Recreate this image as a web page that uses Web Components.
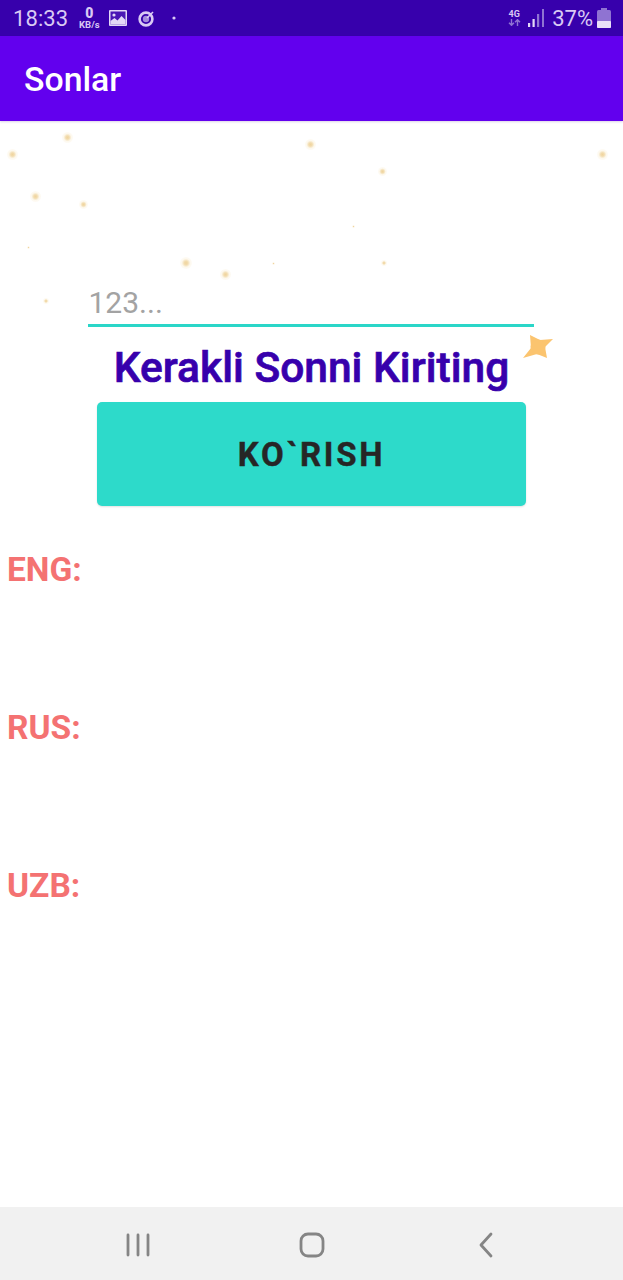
<!DOCTYPE html>
<html>
<head>
<meta charset="utf-8">
<title>Sonlar</title>
<style>
html, body { margin: 0; padding: 0; background: #fff; }
body { width: 623px; height: 1280px; overflow: hidden; font-family: Roboto, "Liberation Sans", sans-serif; display: flex; flex-direction: column; }
</style>
</head>
<body>
<status-bar></status-bar>
<app-bar>Sonlar</app-bar>
<main-screen>
  <sonlar-form></sonlar-form>
  <lang-row>ENG:</lang-row>
  <lang-row>RUS:</lang-row>
  <lang-row>UZB:</lang-row>
</main-screen>
<nav-bar></nav-bar>

<script>
const statusTemplate = document.createElement("template");
statusTemplate.innerHTML = `
<style>
:host { display: flex; align-items: center; height: 36px; flex: none; background: #3700ac; color: #d9c9f4; padding: 0 12px 0 13px; box-sizing: border-box; }
.time { font-size: 22px; letter-spacing: 0.1px; margin-right: 9px; }
.speed { display: flex; flex-direction: column; align-items: center; width: 24px; margin-right: 8px; line-height: 1; font-weight: 700; }
.speed b { font-size: 14px; height: 12px; line-height: 12px; }
.speed span { font-size: 9.500px; margin-top: 1px; }
svg { display: block; }
.pic { margin-right: 11px; }
.target { margin-right: 17px; }
.gap { flex: 1; }
.net { font-size: 9px; font-weight: 700; line-height: 9px; display: flex; flex-direction: column; align-items: center; width: 14px; margin-right: 7px; }
.signal { margin-right: 8px; }
.pct { font-size: 22px; margin-right: 4px; }
</style>
<span class="time">18:33</span>
<div class="speed"><b>0</b><span>KB/s</span></div>
<svg class="pic" width="18" height="16" viewBox="0 0 18 16"><rect width="18" height="16" rx="1" fill="#e3d8f6"/><rect x="1.500" y="1.500" width="15" height="13" fill="#4a17b5"/><circle cx="5" cy="5" r="1.600" fill="#e3d8f6"/><path d="M1.500 14.500V11l4-3 3 2.400L12.500 6l4 4v4.500z" fill="#e3d8f6"/></svg>
<svg class="target" width="17" height="17" viewBox="0 0 17 17" fill="none"><circle cx="8" cy="9" r="6.400" stroke="#d9c9f4" stroke-width="2.600"/><circle cx="8" cy="9" r="3.200" fill="#a48bdc"/><path d="M9 8l6-6" stroke="#d9c9f4" stroke-width="1.600"/></svg>
<svg width="4" height="4" viewBox="0 0 4 4"><circle cx="2" cy="2" r="1.600" fill="#d9c9f4"/></svg>
<div class="gap"></div>
<div class="net"><span>4G</span><svg width="13" height="7" viewBox="0 0 13 7" fill="none" stroke="#8f73d2" stroke-width="1.400"><path d="M3.500 0v6M1 3.800l2.500 2.500 2.500-2.500M9.500 7V1M7 3.200l2.500-2.500 2.500 2.500"/></svg></div>
<svg class="signal" width="16" height="18" viewBox="0 0 16 18"><rect x="0" y="14" width="2.200" height="4" fill="#e3d8f6"/><rect x="4.500" y="10" width="2.200" height="8" fill="#e3d8f6"/><rect x="9" y="5" width="2.200" height="13" fill="#8f73d2"/><rect x="14" y="0" width="2" height="18" fill="#8f73d2"/></svg>
<span class="pct">37%</span>
<svg width="14" height="20" viewBox="0 0 14 20"><rect x="4" y="0" width="6" height="2" fill="#8f73d2"/><rect x="0" y="2" width="14" height="18" rx="1.500" fill="#8f73d2"/><rect x="0" y="13" width="14" height="7" rx="1" fill="#e9e0f8"/></svg>
`;

class StatusBar extends HTMLElement {
  connectedCallback() {
    this.attachShadow({ mode: "open" }).appendChild(statusTemplate.content.cloneNode(true));
  }
}
customElements.define("status-bar", StatusBar);

const appBarTemplate = document.createElement("template");
appBarTemplate.innerHTML = `
<style>
:host { display: flex; align-items: center; flex: none; height: 85px; padding: 2px 0 0 24px; box-sizing: border-box; background: #6200ee; color: #fff; font-size: 33.800px; font-weight: 500; box-shadow: 0 1px 2px rgba(60,0,120,.18); position: relative; z-index: 1; }
</style>
<slot></slot>
`;

class AppBar extends HTMLElement {
  connectedCallback() {
    this.attachShadow({ mode: "open" }).appendChild(appBarTemplate.content.cloneNode(true));
  }
}
customElements.define("app-bar", AppBar);

// the confetti dots lying over the screen: [x, y, size] relative to the screen top
const SPARKLES = [
  [12, 33, 11], [67, 16, 11], [310, 23, 11], [35, 75, 11], [83, 83, 9], [186, 142, 12],
  [225, 153, 11], [46, 180, 6], [273, 142, 3], [28, 126, 3], [602, 33, 11], [382, 50, 9],
  [384, 142, 6], [353, 105, 3]
];

const screenTemplate = document.createElement("template");
screenTemplate.innerHTML = `
<style>
:host { display: flex; flex-direction: column; flex: 1; position: relative; background: #fff; }
.sparkle { position: absolute; border-radius: 50%; background: radial-gradient(circle, #f0d49f 0, #f2dcae 22%, rgba(250,238,212,.4) 50%, rgba(255,255,255,0) 100%); }
.big { position: absolute; left: 520px; top: 207px; filter: blur(.6px); }
</style>
<slot></slot>
<svg class="big" width="38" height="36" viewBox="0 0 38 36"><path d="M10 7L20 12 33 11 25 19 27 30 17 26 3 30 11 20z" fill="#fbc46f"/><circle cx="18" cy="19" r="7.500" fill="#fbc46f"/></svg>
`;

class MainScreen extends HTMLElement {
  connectedCallback() {
    const root = this.attachShadow({ mode: "open" });
    root.appendChild(screenTemplate.content.cloneNode(true));
    SPARKLES.forEach(([x, y, s]) => {
      const dot = document.createElement("div");
      dot.className = "sparkle";
      dot.style.cssText = `left:${x - s / 2}px;top:${y - s / 2}px;width:${s}px;height:${s}px`;
      root.appendChild(dot);
    });
  }
}
customElements.define("main-screen", MainScreen);

const formTemplate = document.createElement("template");
formTemplate.innerHTML = `
<style>
:host { display: flex; flex-direction: column; align-items: center; padding-top: 163px; height: 429px; box-sizing: border-box; flex: none; }
.field { width: 446px; height: 43px; box-sizing: border-box; border-bottom: 3px solid #2ad6c8; margin-right: 2px; color: #a3a3a3; font-size: 30px; line-height: 37px; padding-left: 1px; }
h1 { margin: 14px 0 0; font-size: 42.500px; line-height: 54px; font-weight: 500; color: #3700ac; white-space: nowrap; -webkit-text-stroke: .7px #3700ac; }
button { all: unset; display: flex; align-items: center; justify-content: center; box-sizing: border-box; width: 429px; height: 104px; margin-top: 7px; border-radius: 5px; background: #2ddaca; color: #262626; font: 700 33px Roboto, "Liberation Sans", sans-serif; letter-spacing: 2.700px; -webkit-text-stroke: .4px #262626; box-shadow: 0 1px 2px rgba(0,0,0,.12); }
</style>
<div class="field">123...</div>
<h1>Kerakli Sonni Kiriting</h1>
<button>KO\`RISH</button>
`;

class SonlarForm extends HTMLElement {
  connectedCallback() {
    this.attachShadow({ mode: "open" }).appendChild(formTemplate.content.cloneNode(true));
  }
}
customElements.define("sonlar-form", SonlarForm);

const langTemplate = document.createElement("template");
langTemplate.innerHTML = `
<style>
:host { display: block; flex: none; height: 158px; padding-left: 7px; box-sizing: border-box; color: #f47272; font-size: 33.500px; font-weight: 700; line-height: 40px; }
</style>
<slot></slot>
`;

class LangRow extends HTMLElement {
  connectedCallback() {
    this.attachShadow({ mode: "open" }).appendChild(langTemplate.content.cloneNode(true));
  }
}
customElements.define("lang-row", LangRow);

const navTemplate = document.createElement("template");
navTemplate.innerHTML = `
<style>
:host { display: grid; grid-template-columns: 173px 199px 1fr; flex: none; height: 73px; background: #f1f1f1; align-items: center; padding-top: 3px; box-sizing: border-box; }
svg { display: block; }
.recent { margin-left: 126px; }
.home { margin-left: 126px; }
.back { margin-left: 106px; }
</style>
<svg class="recent" width="24" height="24" viewBox="0 0 24 24" stroke="#858585" stroke-width="2.800" stroke-linecap="round"><path d="M2 2v20M12 2v20M22 2v20"/></svg>
<svg class="home" width="26" height="26" viewBox="0 0 26 26" fill="none" stroke="#858585" stroke-width="2.800"><rect x="2" y="2" width="22" height="22" rx="7"/></svg>
<svg class="back" width="16" height="26" viewBox="0 0 16 26" fill="none" stroke="#858585" stroke-width="2.800" stroke-linecap="round" stroke-linejoin="round"><path d="M13 2L3 13l10 11"/></svg>
`;

class NavBar extends HTMLElement {
  connectedCallback() {
    this.attachShadow({ mode: "open" }).appendChild(navTemplate.content.cloneNode(true));
  }
}
customElements.define("nav-bar", NavBar);
</script>
</body>
</html>
